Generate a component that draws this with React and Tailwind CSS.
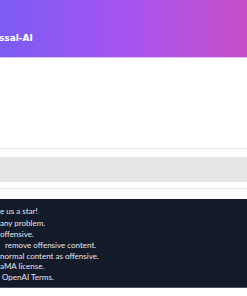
export default function App() {
    const notes = [
        {text: "e us a star!", pad: "pl-0", lh: "leading-[12px]"},
        {text: "any problem.", pad: "pl-0", lh: "leading-[12px]"},
        {text: "offensive.", pad: "pl-0", lh: "leading-[11px]"},
        {text: "remove offensive content.", pad: "pl-[5px]", lh: "leading-[10.5px]"},
        {text: "normal content as offensive.", pad: "pl-0", lh: "leading-[10.5px]"},
        {text: "aMA license.", pad: "pl-0", lh: "leading-[10.5px]"},
        {text: "OpenAI Terms.", pad: "pl-[2px]", lh: "leading-[10.5px]"},
    ];

    return (
        <div className="w-[247px] h-[296px] bg-white overflow-hidden" style={{fontFamily: "Lato, 'Open Sans', sans-serif"}}>
            <div className="header h-[58px] flex items-end pb-[14px] bg-gradient-to-r from-[#7b5cf2] via-[#a553f2] to-[#c74fc6] border-b border-[#dcc3f7]">
                <p className="text-white text-[9px] font-bold leading-none -ml-[1px]"
                   style={{fontFamily: "'DejaVu Sans', sans-serif"}}>ssal-AI</p>
            </div>

            <div className="chat h-[91px] border-b border-[#e5e7eb]"></div>

            <div className="input mt-[8px] h-[25px] bg-[#e5e5e7]"></div>

            <div className="mt-[6px] h-px bg-[#e5e7eb]"></div>

            <div className="notes mt-[10px] h-[89px] bg-[#131a2a] border-b border-[#4b5060] pt-[6px] flex flex-col">
                {notes.map((n) => (
                    <p key={n.text} className={`text-[8px] text-[#e5e7eb] ${n.pad} ${n.lh}`}>{n.text}</p>
                ))}
            </div>
        </div>
    )
}
